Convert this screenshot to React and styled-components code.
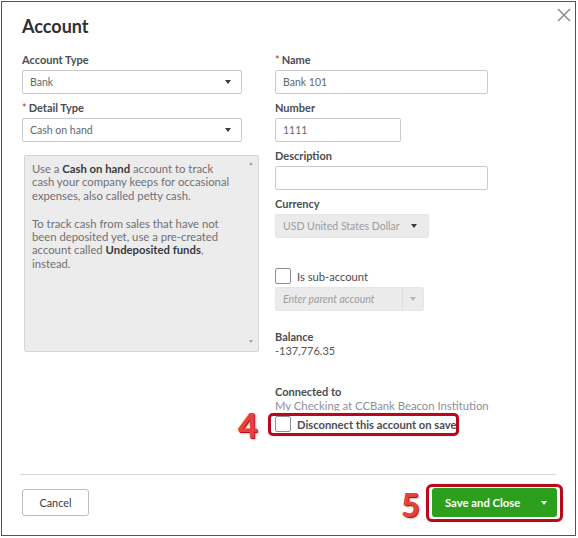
import styled, { createGlobalStyle } from "styled-components";

const GlobalStyle = createGlobalStyle`
  html, body {
    margin: 0;
    padding: 0;
    background: #ffffff;
  }
  body {
    font-family: Lato, "Open Sans", "Liberation Sans", sans-serif;
    color: #393a3d;
  }
  * {
    box-sizing: border-box;
  }
`;

const Frame = styled.div`
  margin: 1px 0 0 1px;
  width: 575px;
  height: 535px;
  border: 1px solid #e3161b;
  padding: 13px 20px 18px 20px;
  display: flex;
  flex-direction: column;
`;

const Header = styled.div`
  display: flex;
  justify-content: space-between;
  align-items: flex-start;
`;

const Title = styled.h1`
  margin: 0;
  font-size: 18px;
  line-height: 22px;
  font-weight: 700;
  color: #2f3033;
`;

const CloseButton = styled.button`
  margin: -7px -16px 0 0;
  padding: 0;
  width: 14px;
  height: 14px;
  border: 0;
  background: none;
  display: flex;
  & svg {
    display: block;
  }
`;

const Body = styled.div`
  margin-top: 16px;
  display: flex;
  gap: 16px;
`;

const Column = styled.div`
  width: ${(p) => p.$w}px;
  display: flex;
  flex-direction: column;
  align-items: flex-start;
`;

const FieldGroup = styled.div`
  & + & {
    margin-top: 7px;
  }
`;

const Label = styled.div`
  font-size: 11px;
  line-height: 14px;
  font-weight: 700;
  color: #4b4d51;
  margin-bottom: ${(p) => (p.$flush ? 0 : 3)}px;
  margin-top: ${(p) => p.$top || 0}px;
`;

const Required = styled.span`
  color: #d52b1e;
  font-weight: 400;
  margin-right: 2px;
`;

const Field = styled.div`
  width: ${(p) => p.$w}px;
  height: 24px;
  margin-top: ${(p) => p.$top || 0}px;
  border: 1px solid ${(p) => (p.$disabled ? "#e6e6e6" : "#c9cbcf")};
  background: ${(p) => (p.$disabled ? "#ebebeb" : "#ffffff")};
  border-radius: 2px;
  display: flex;
  align-items: center;
  padding: 0 0 0 7px;
  font-size: 10.5px;
  color: ${(p) => (p.$disabled ? "#9b9da1" : "#65676b")};
  font-style: ${(p) => (p.$italic ? "italic" : "normal")};
`;

const FieldText = styled.span`
  flex: 1;
  white-space: nowrap;
`;

const Caret = styled.span`
  width: 0;
  height: 0;
  border-left: 3.5px solid transparent;
  border-right: 3.5px solid transparent;
  border-top: 4px solid ${(p) => p.$color || "#393a3d"};
  margin-right: ${(p) => p.$right ?? 10}px;
`;

const CaretBox = styled.span`
  width: 21px;
  align-self: stretch;
  border-left: 1px solid #dcdcdc;
  display: flex;
  align-items: center;
  justify-content: center;
`;

const HelpPanel = styled.div`
  margin: 13px 0 0 2px;
  width: 235px;
  height: 197px;
  background: #ececec;
  border: 1px solid #d6d6d6;
  border-radius: 2px;
  padding: 6px 10px 0 7px;
  position: relative;
  font-size: 11.3px;
  line-height: 13.3px;
  color: #6f7075;
  white-space: nowrap;
  & p {
    margin: 0;
  }
  & p + p {
    margin-top: 15px;
  }
  & b {
    color: #393a3d;
    font-weight: 700;
  }
`;

const ScrollArrow = styled.span`
  position: absolute;
  right: 5px;
  ${(p) => (p.$down ? "bottom: 8px;" : "top: 6px;")}
  width: 0;
  height: 0;
  border-left: 2.5px solid transparent;
  border-right: 2.5px solid transparent;
  ${(p) => (p.$down ? "border-top" : "border-bottom")}: 3px solid #a3a3a3;
`;

const CheckRow = styled.div`
  display: flex;
  align-items: center;
  gap: 6px;
  margin-top: ${(p) => p.$top || 0}px;
  font-size: 11.2px;
  color: #4b4d51;
  font-weight: ${(p) => (p.$bold ? 700 : 400)};
  white-space: nowrap;
  position: relative;
`;

const Checkbox = styled.span`
  width: 16px;
  height: 16px;
  border: 1px solid #8d9096;
  border-radius: 2px;
  background: #ffffff;
  flex: none;
`;

const Value = styled.div`
  font-size: 11px;
  line-height: 14px;
  color: #55575b;
`;

const ClippedValue = styled.div`
  font-size: 11.3px;
  line-height: 14px;
  height: 12px;
  overflow: hidden;
  color: #8d9096;
  white-space: nowrap;
`;

const Highlight = styled.span`
  position: absolute;
  left: ${(p) => p.$l}px;
  right: ${(p) => p.$r}px;
  top: ${(p) => p.$t}px;
  bottom: ${(p) => p.$b}px;
  border: 3px solid #b8091c;
  border-radius: ${(p) => p.$radius || 5}px;
  box-shadow: 0 0 1px rgba(184, 9, 28, 0.5);
  pointer-events: none;
`;

const StepNumber = styled.span`
  position: absolute;
  left: ${(p) => p.$l}px;
  top: ${(p) => p.$t}px;
  font-size: ${(p) => p.$size}px;
  line-height: ${(p) => p.$size}px;
  font-weight: 900;
  color: #e8413c;
  text-shadow: 1px 1px 0 #b3141b, 2px 2px 2px rgba(0, 0, 0, 0.25);
`;

const Footer = styled.div`
  margin: auto -1px 0 -2px;
  border-top: 1px solid #d4d7dc;
  padding: 13px 1px 0 2px;
  display: flex;
  justify-content: space-between;
  align-items: center;
`;

const CancelButton = styled.button`
  width: 67px;
  height: 27px;
  border: 1px solid #babec5;
  border-radius: 3px;
  background: #ffffff;
  font-family: inherit;
  font-size: 10.8px;
  color: #393a3d;
  padding: 0;
`;

const SaveGroup = styled.div`
  position: relative;
  margin-right: -2px;
`;

const SaveButton = styled.button`
  width: 125px;
  height: 29px;
  border: 0;
  border-radius: 3px;
  background: #2ca01c;
  color: #ffffff;
  font-family: inherit;
  font-size: 11.3px;
  font-weight: 700;
  display: flex;
  align-items: center;
  padding: 0 0 0 13px;
  & span:first-child {
    flex: 1;
    text-align: left;
  }
`;

const WhiteCaret = styled(Caret)`
  border-top-color: #ffffff;
`;

export default function App() {
  return (
    <>
      <GlobalStyle />
      <Frame>
        <Header>
          <Title>Account</Title>
          <CloseButton aria-label="Close">
            <svg width="14" height="14" viewBox="0 0 14 14">
              <path d="M1 1 L13 13 M13 1 L1 13" stroke="#8d9096" strokeWidth="1.6" fill="none" />
            </svg>
          </CloseButton>
        </Header>

        <Body>
          <Column $w={237}>
            <FieldGroup>
              <Label>Account Type</Label>
              <Field $w={220}>
                <FieldText>Bank</FieldText>
                <Caret $right={10} />
              </Field>
            </FieldGroup>
            <FieldGroup>
              <Label>
                <Required>*</Required>Detail Type
              </Label>
              <Field $w={220}>
                <FieldText>Cash on hand</FieldText>
                <Caret $right={10} />
              </Field>
            </FieldGroup>
            <HelpPanel>
              <p>
                Use a <b>Cash on hand</b> account to track
                <br />
                cash your company keeps for occasional
                <br />
                expenses, also called petty cash.
              </p>
              <p>
                To track cash from sales that have not
                <br />
                been deposited yet, use a pre-created
                <br />
                account called <b>Undeposited funds</b>,
                <br />
                instead.
              </p>
              <ScrollArrow />
              <ScrollArrow $down />
            </HelpPanel>
          </Column>

          <Column $w={266}>
            <FieldGroup>
              <Label>
                <Required>*</Required>Name
              </Label>
              <Field $w={213}>
                <FieldText>Bank 101</FieldText>
              </Field>
            </FieldGroup>
            <FieldGroup>
              <Label>Number</Label>
              <Field $w={126}>
                <FieldText>1111</FieldText>
              </Field>
            </FieldGroup>
            <FieldGroup>
              <Label>Description</Label>
              <Field $w={213} />
            </FieldGroup>
            <FieldGroup>
              <Label>Currency</Label>
              <Field $w={154} $disabled>
                <FieldText>USD United States Dollar</FieldText>
                <Caret $right={11} />
              </Field>
            </FieldGroup>

            <CheckRow $top={30}>
              <Checkbox />
              Is sub-account
            </CheckRow>
            <Field $w={149} $top={3} $disabled $italic>
              <FieldText>Enter parent account</FieldText>
              <CaretBox>
                <Caret $color="#b5b7ba" $right={0} />
              </CaretBox>
            </Field>

            <Label $top={19} $flush>
              Balance
            </Label>
            <Value>-137,776.35</Value>

            <Label $top={27} $flush>
              Connected to
            </Label>
            <ClippedValue>My Checking at CCBank Beacon Institution</ClippedValue>

            <CheckRow $top={5} $bold>
              <Checkbox />
              Disconnect this account on save
              <Highlight $l={-7} $r={-3} $t={-3} $b={-4} />
              <StepNumber $l={-37} $t={-8} $size={34}>
                4
              </StepNumber>
            </CheckRow>
          </Column>
        </Body>

        <Footer>
          <CancelButton>Cancel</CancelButton>
          <SaveGroup>
            <SaveButton>
              <span>Save and Close</span>
              <WhiteCaret $right={10} />
            </SaveButton>
            <Highlight $l={-6} $r={-6} $t={-4} $b={-5} $radius={6} />
            <StepNumber $l={-31} $t={1} $size={32}>
              5
            </StepNumber>
          </SaveGroup>
        </Footer>
      </Frame>
    </>
  );
}
